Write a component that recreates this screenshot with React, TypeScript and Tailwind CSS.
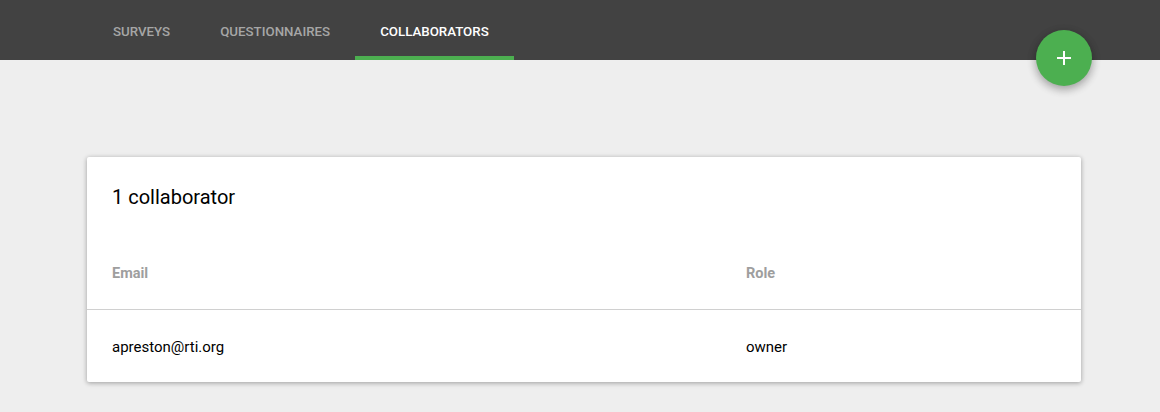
import React from "react";

export default function App() {
  return (
    <div className="relative min-h-[412px] w-[1160px] bg-[#eeeeee]" style={{ fontFamily: "Roboto, 'Liberation Sans', sans-serif" }}>
      <div className="h-[60px] bg-[#424242] flex pl-[88px]">
        {[
          { label: "SURVEYS", active: false },
          { label: "QUESTIONNAIRES", active: false },
          { label: "COLLABORATORS", active: true },
        ].map((t) => (
          <div
            key={t.label}
            className={
              "h-[60px] flex items-center px-[25px] text-[13.3px] font-medium border-b-4 pt-[7px] " +
              (t.active ? "text-white border-[#4caf50]" : "text-[#a6a6a6] border-transparent")
            }
          >
            {t.label}
          </div>
        ))}
      </div>
      <button className="absolute left-[1036px] top-[30px] w-[56px] h-[56px] rounded-full bg-[#4caf50] flex items-center justify-center shadow-[0_3px_10px_rgba(0,0,0,0.16),0_3px_10px_rgba(0,0,0,0.23)]">
        <svg width="16" height="16" viewBox="0 0 16 16">
          <path d="M8 1v14M1 8h14" stroke="white" strokeWidth="2" />
        </svg>
      </button>
      <div className="pt-[97px] pb-[30px]">
        <div className="ml-[87px] w-[994px] bg-white rounded-[2px] shadow-[0_1px_6px_rgba(0,0,0,0.12),0_1px_4px_rgba(0,0,0,0.24)]">
          <div className="h-[80px] flex items-center px-[25px] text-[20px] text-black">1 collaborator</div>
          <div className="grid grid-cols-[634px_1fr] h-[73px] items-center border-b border-[#d0d0d0] text-[14.5px] font-bold text-[#9e9e9e] pt-[2px]">
            <div className="px-[25px]">Email</div>
            <div className="px-[25px]">Role</div>
          </div>
          <div className="grid grid-cols-[634px_1fr] h-[72px] items-center text-[15px] text-black pt-[2px]">
            <div className="px-[25px]">apreston@rti.org</div>
            <div className="px-[25px]">owner</div>
          </div>
        </div>
      </div>
    </div>
  );
}
